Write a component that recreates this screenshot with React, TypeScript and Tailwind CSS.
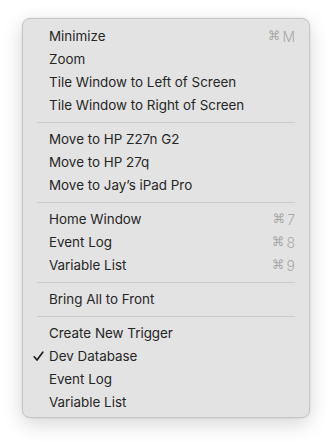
import React from 'react';

type Item =
  | { type: 'sep' }
  | { type: 'item'; label: string; shortcut?: string; checked?: boolean };

const items: Item[] = [
  { type: 'item', label: 'Minimize', shortcut: 'M' },
  { type: 'item', label: 'Zoom' },
  { type: 'item', label: 'Tile Window to Left of Screen' },
  { type: 'item', label: 'Tile Window to Right of Screen' },
  { type: 'sep' },
  { type: 'item', label: 'Move to HP Z27n G2' },
  { type: 'item', label: 'Move to HP 27q' },
  { type: 'item', label: 'Move to Jay\u2019s iPad Pro' },
  { type: 'sep' },
  { type: 'item', label: 'Home Window', shortcut: '7' },
  { type: 'item', label: 'Event Log', shortcut: '8' },
  { type: 'item', label: 'Variable List', shortcut: '9' },
  { type: 'sep' },
  { type: 'item', label: 'Bring All to Front' },
  { type: 'sep' },
  { type: 'item', label: 'Create New Trigger' },
  { type: 'item', label: 'Dev Database', checked: true },
  { type: 'item', label: 'Event Log' },
  { type: 'item', label: 'Variable List' },
];

const Check = () => (
  <svg width="11" height="11" viewBox="0 0 11 11" fill="none">
    <path d="M1.2 5.8 L4 9 L9.8 1.2" stroke="#1f1f1f" strokeWidth="1.7" strokeLinecap="round" strokeLinejoin="round" />
  </svg>
);

export default function App() {
  return (
    <div className="w-[332px] h-[445px] bg-white pt-[18px] pl-[22px]" style={{ fontFamily: 'Inter, "Liberation Sans", sans-serif' }}>
      <div className="w-[288px] h-[400px] rounded-[8px] border border-[#c6c6c6] bg-[#e3e3e3] pt-[6px] pb-[3px] shadow-[0_6px_20px_rgba(0,0,0,0.16),0_0_3px_rgba(0,0,0,0.08)]">
        {items.map((it, i) =>
          it.type === 'sep' ? (
            <div key={i} className="h-[11px] flex items-center px-[14px]">
              <div className="h-px w-full bg-[#cbcbcb]" />
            </div>
          ) : (
            <div key={i} className="h-[23px] flex items-center pl-[10px] pr-[14px] text-[13.4px] text-[#262626]">
              <span className="w-[16px] flex items-center">{it.checked && <Check />}</span>
              <span className="flex-1">{it.label}</span>
              {it.shortcut && (
                <span className="flex items-center text-[#a8a8a8]">
                  <span className="text-[12.5px] mr-[2px]" style={{ fontFamily: '"DejaVu Sans", sans-serif' }}>⌘</span>
                  <span className="text-[14px] font-light">{it.shortcut}</span>
                </span>
              )}
            </div>
          )
        )}
      </div>
    </div>
  );
}
